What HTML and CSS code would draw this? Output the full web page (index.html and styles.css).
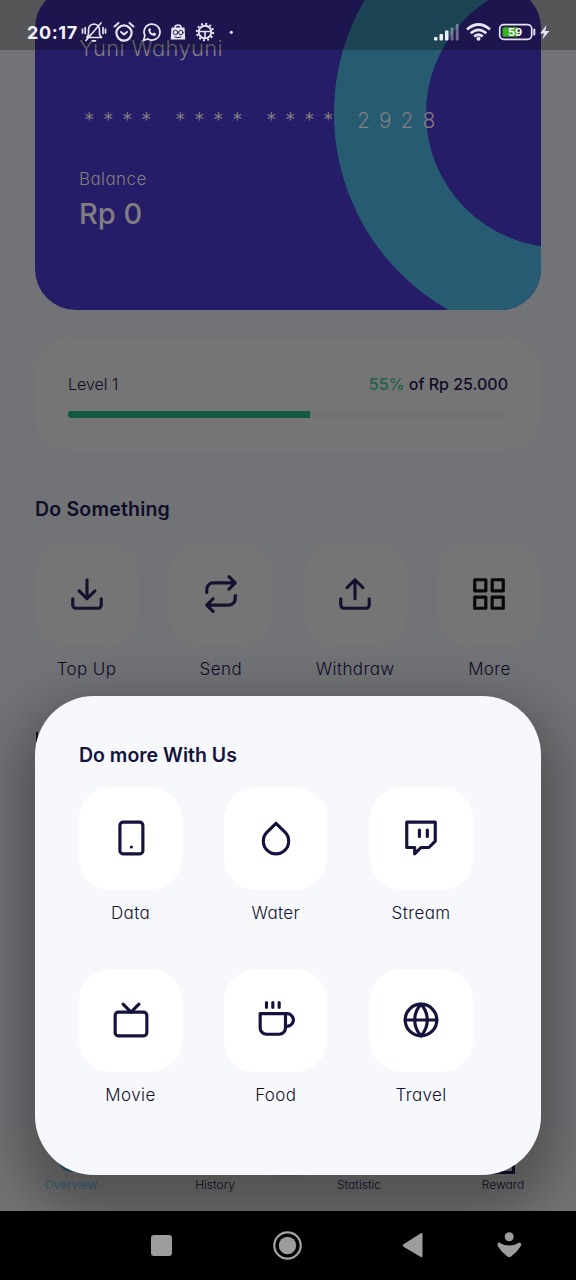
FILE: index.html
```html
<!DOCTYPE html>
<html lang="en">
<head>
<meta charset="utf-8">
<title>Wallet</title>
<link rel="stylesheet" href="styles.css">
</head>
<body>
<div class="phone">
  <main class="content">
    <section class="card">
      <svg class="card-ring" viewBox="0 0 506 323"><circle cx="525" cy="126.5" r="180" fill="none" stroke="#265b71" stroke-width="92"/></svg>
      <div class="card-name"><span>Yuni Wahyuni</span></div>
      <div class="card-number"><span class="stars">****</span><span class="stars">****</span><span class="stars">****</span><span class="digits">2928</span></div>
      <div class="card-label"><span>Balance</span></div>
      <div class="card-balance"><span>Rp 0</span></div>
    </section>
    <section class="level">
      <div class="level-row"><span class="level-name">Level 1</span><span class="level-goal"><b>55%</b> of Rp 25.000</span></div>
      <div class="track"><div class="fill" style="width:55%"></div></div>
    </section>
    <h2 class="heading">Do Something</h2>
    <section class="actions">
      <div class="action"><div class="tile"><svg class="icon" viewBox="0 0 24 24"><path d="M21 15v4a2 2 0 0 1-2 2H5a2 2 0 0 1-2-2v-4M7 10l5 5 5-5M12 15V3"/></svg></div><span>Top Up</span></div>
      <div class="action"><div class="tile"><svg class="icon" viewBox="0 0 24 24"><path d="M17 1l4 4-4 4M3 11V9a4 4 0 0 1 4-4h14M7 23l-4-4 4-4M21 13v2a4 4 0 0 1-4 4H3"/></svg></div><span>Send</span></div>
      <div class="action"><div class="tile"><svg class="icon" viewBox="0 0 24 24"><path d="M21 15v4a2 2 0 0 1-2 2H5a2 2 0 0 1-2-2v-4M17 8l-5-5-5 5M12 3v12"/></svg></div><span>Withdraw</span></div>
      <div class="action"><div class="tile"><svg class="icon black" viewBox="0 0 24 24"><path d="M3 3h7v7H3zM14 3h7v7h-7zM14 14h7v7h-7zM3 14h7v7H3z"/></svg></div><span>More</span></div>
    </section>
    <div class="next-mark"></div>
  </main>
  <nav class="tabs">
    <div class="tab active"><i class="tab-dot"></i><span>Overview</span></div>
    <div class="tab"><span>History</span></div>
    <div class="tab"><span>Statistic</span></div>
    <div class="tab"><i class="tab-box"></i><span>Reward</span></div>
    <i class="fab"></i>
  </nav>
  <footer class="navbar">
    <svg viewBox="0 0 576 69"><g fill="#9d9d9d"><rect x="151" y="24" width="21" height="21" rx="3"/><circle cx="287.500" cy="34.500" r="8.700"/><circle cx="287.500" cy="34.500" r="13.200" fill="none" stroke="#a5a5a5" stroke-width="2.200"/><path d="M403.500 33.300 420.800 22.300Q422.500 21.500 422.500 23.500V45Q422.500 47 420.800 46L403.500 35.700Q402 34.500 403.500 33.300Z"/><circle cx="509.200" cy="25.800" r="4.500"/><path d="M499 31.500Q503.500 34.500 509.200 34.500T519.500 31.500Q522.500 32.500 520.500 35.500 517.500 40.500 511 45.500 509.200 47 507.500 45.500 501 40.500 498 35.500 496.500 32.500 499 31.500Z"/></g></svg>
  </footer>

  <section class="sheet">
    <h2 class="sheet-title">Do more With Us</h2>
    <div class="grid">
      <div class="action"><div class="tile"><svg class="icon" viewBox="0 0 24 24"><rect x="5" y="2" width="14.500" height="20" rx="2"/><path d="M12.200 17.700h.01"/></svg></div><span>Data</span></div>
      <div class="action"><div class="tile"><svg class="icon" viewBox="0 0 24 24"><path d="M12 2.690l5.660 5.660a8 8 0 1 1-11.310 0z"/></svg></div><span>Water</span></div>
      <div class="action"><div class="tile"><svg class="icon" viewBox="0 0 24 24"><path d="M21 2H3v16h5v4l4-4h5l4-4V2zM11 11V7M16 11V7"/></svg></div><span>Stream</span></div>
      <div class="action"><div class="tile"><svg class="icon" viewBox="0 0 24 24"><rect x="2" y="7" width="20" height="15" rx="2"/><path d="M17 2l-5 5-5-5"/></svg></div><span>Movie</span></div>
      <div class="action"><div class="tile"><svg class="icon" viewBox="0 0 24 24"><path d="M18 8h1a4 4 0 0 1 0 8h-1M2 8h16v9a4 4 0 0 1-4 4H6a4 4 0 0 1-4-4V8zM6 1v3M10 1v3M14 1v3"/></svg></div><span>Food</span></div>
      <div class="action"><div class="tile"><svg class="icon" viewBox="0 0 24 24"><circle cx="12" cy="12" r="10"/><path d="M2 12h20M12 2a15.300 15.300 0 0 1 4 10 15.300 15.300 0 0 1-4 10 15.300 15.300 0 0 1-4-10 15.300 15.300 0 0 1 4-10z"/></svg></div><span>Travel</span></div>
    </div>
  </section>

  <header class="status">
    <span class="clock">20:17</span>
    <svg class="status-icons" viewBox="80 0 496 50" fill="none" stroke="#e6e3f2" stroke-width="2" stroke-linecap="round" stroke-linejoin="round">
      <path d="M87 37.500h14.500l-2-3V30q0-5.500-5.500-6-5.500.5-5.500 6v4.500zM86 40.500 101 23M92.500 40.800h3M82.500 29v4M85.200 27.500v6M103 27.500v6M105.500 29v4" stroke-width="1.700"/>
      <circle cx="124" cy="33" r="7.600" stroke-width="2.200"/><path d="M114.500 26.500 118.500 23M133.500 26.500 129.500 23M121 32l3 2.500 3-2.500"/>
      <path d="M143.500 40.500l1.400-4.800a8 8 0 1 1 3 3.200z" stroke-width="1.700"/><path d="M148.500 28.800c-1.300 4 3.500 8.200 7 6.700l.8-1.800-2.300-1.200-1.200 1c-1.300-.5-2-1.500-2.500-2.500l.8-1-.8-1.800z" fill="#e6e3f2" stroke="none"/>
      <path d="M171.500 27.500h13l.8 12h-14.600z" fill="#e6e3f2" stroke="none"/><path d="M175 27.500q0-2.500 3-2.500t3 2.500" stroke-width="1.600"/><g stroke="#242044" stroke-width="1"><circle cx="175.500" cy="32.500" r="2.200"/><circle cx="180.800" cy="32.500" r="2.200"/><path d="M175 37q3 1.500 6 0"/></g>
      <circle cx="205" cy="32" r="6.300" stroke-width="1.900"/><circle cx="205" cy="32" r="8.200" stroke-width="2" stroke-dasharray="2 2.290" stroke-linecap="butt"/><path d="M200 31.500h10M205 32v5" stroke-width="1.600"/>
      <circle cx="231.300" cy="32.300" r="1.600" fill="#e6e3f2" stroke="none"/>
      <g stroke="none" fill="#efedf7"><rect x="434" y="37" width="3.500" height="3.500" rx="1"/><rect x="439.500" y="34" width="3.500" height="6.500" rx="1"/><rect x="445" y="30.500" width="3.500" height="10" rx="1"/><rect x="450.500" y="27.500" width="3" height="13" rx="1" opacity=".4"/><rect x="455.700" y="24" width="3" height="16.500" rx="1" opacity=".4"/></g>
      <g stroke-width="2.700" stroke-linecap="butt"><path d="M467 29.500q11.500-10 23 0M470.700 33.300q7.800-7 15.600 0M474.200 36.500q4.300-3.500 8.600 0"/></g><circle cx="478.500" cy="38.800" r="2" fill="#e6e3f2" stroke="none"/>
      <rect x="499.700" y="24.700" width="32" height="14.600" rx="4" stroke-width="1.700"/><rect x="502.500" y="27.300" width="15.500" height="9.500" rx="1.500" fill="#3fae1e" stroke="none"/><path d="M534.300 29.500v5"/>
      <text x="508" y="36.300" class="battery">59</text>
      <path d="M546.500 25 540 33.500h4L542.300 39.500 549.500 31h-4.300z" fill="#e6e3f2" stroke="none"/>
    </svg>
  </header>
</div>
</body>
</html>
```
FILE: styles.css
```css
* { box-sizing: border-box; }
body { margin: 0; font-family: Inter, "Open Sans", sans-serif; font-feature-settings: "cv11"; color: #0f0d28; }
h2 { margin: 0; }
.phone { position: relative; width: 576px; height: 1280px; overflow: hidden; background: #727376; display: flex; flex-direction: column; }
.content { flex: 1; min-height: 0; padding: 0 35px; display: flex; flex-direction: column; }

.card { position: relative; flex: none; height: 323px; margin-top: -13px; padding: 46px 44px 0; border-radius: 41px; background: #261d69; color: #807e80; overflow: hidden; }
.card-ring { position: absolute; inset: 0; width: 506px; height: 323px; }
.card > div { position: relative; white-space: nowrap; }
.card-name { height: 30px; line-height: 30px; font-size: 22px; font-weight: 350; letter-spacing: .3px; }
.card-number { margin-top: 43px; height: 30px; line-height: 30px; font-size: 21px; font-weight: 350; padding-left: 5px; display: flex; }
.stars { width: 91px; letter-spacing: 8.500px; }
.digits { letter-spacing: 9px; }
.card-label { margin-top: 30px; height: 26px; line-height: 26px; font-size: 17px; font-weight: 350; letter-spacing: .4px; }
.card-balance { margin-top: 1px; height: 42px; line-height: 42px; font-size: 29px; font-weight: 500; }

.level { flex: none; height: 112px; margin-top: 28px; padding: 32.500px 33px; border-radius: 34px; background: #757575; }
.level-row { display: flex; justify-content: space-between; height: 26px; line-height: 26px; font-size: 16px; }
.level-name { font-weight: 350; }
.level-goal { font-weight: 500; }
.level-goal b { font-weight: 500; color: #1d6348; }
.track { height: 7px; margin-top: 14px; border-radius: 3px; background: #727273; overflow: hidden; }
.fill { height: 7px; background: #11593f; }

.heading { margin-top: 43px; height: 32px; line-height: 32px; font-size: 19.500px; font-weight: 570; letter-spacing: .2px; }
.actions { display: flex; justify-content: space-between; margin-top: 18px; }
.action { width: 103px; display: flex; flex-direction: column; align-items: center; font-size: 17px; font-weight: 350; letter-spacing: .4px; white-space: nowrap; }
.action > span { margin-top: 10px; line-height: 27px; }
.tile { width: 103px; height: 103px; border-radius: 32px; background: #757575; display: flex; align-items: center; justify-content: center; }
.icon { width: 38px; height: 38px; overflow: visible; fill: none; stroke: #15122f; stroke-width: 2; stroke-linecap: round; stroke-linejoin: round; margin: -1px 0 0 0; }
.icon.black { stroke: #080809; }
.next-mark { width: 2px; height: 10px; margin: 49px 0 0 1px; background: #101018; }

.tabs { position: relative; flex: none; height: 83px; background: #747474; display: flex; }
.tab { position: relative; width: 144px; padding-top: 47px; text-align: center; font-size: 12px; line-height: 20px; font-weight: 350; }
.tab span { position: relative; left: -1px; }
.active { color: #2a627f; }
.tab-dot { position: absolute; left: 57px; top: 14px; width: 30px; height: 30px; border-radius: 50%; background: #225c70; }
.tab-box { position: absolute; left: 57px; top: 20px; width: 26px; height: 26px; border: 3px solid #12102f; }
.fab { position: absolute; left: 262px; top: -7px; width: 52px; height: 52px; border-radius: 50%; box-shadow: 0 1px 6px rgba(0,0,0,.4); background: #555; }
.navbar { flex: none; height: 69px; background: #000; position: relative; z-index: 2; }
.navbar svg { display: block; width: 576px; height: 69px; }

.sheet { position: absolute; left: 35px; top: 696px; width: 506px; height: 479px; border-radius: 59px; background: #f6f8fc; padding: 43px 44px 0; box-shadow: 0 24px 52px 18px rgba(0,0,0,.29); color: #14132f; }
.sheet-title { height: 32px; line-height: 32px; font-size: 19.500px; font-weight: 570; color: #14133d; }
.grid { display: grid; grid-template-columns: repeat(3, 103px); column-gap: 42.300px; row-gap: 41.500px; margin-top: 16px; }
.sheet .tile { background: #fff; }
.sheet .icon { stroke: #14133d; }

.status { position: absolute; left: 0; top: 0; width: 576px; height: 50px; display: flex; background: rgba(0,0,0,.25); color: #f3f1fb; }
.clock { width: 80px; padding-left: 27px; line-height: 65px; height: 50px; font-size: 18px; font-weight: 700; letter-spacing: .6px; font-feature-settings: normal; }
.status-icons { width: 496px; height: 50px; flex: none; }
.battery { font: 700 11px Inter, sans-serif; fill: #fff; stroke: none; }
```
